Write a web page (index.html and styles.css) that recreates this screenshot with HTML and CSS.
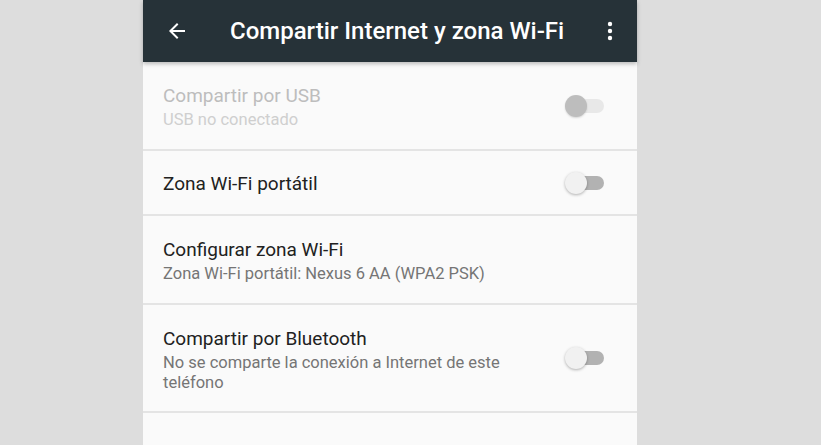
FILE: index.html
```html
<!DOCTYPE html>
<html lang="es">
<head>
<meta charset="utf-8">
<title>Compartir Internet y zona Wi-Fi</title>
<link rel="stylesheet" href="styles.css">
</head>
<body>
<div class="phone">
  <header class="appbar">
    <svg class="back" width="24" height="24" viewBox="0 0 24 24"><path d="M20 11H7.83l5.59-5.59L12 4l-8 8 8 8 1.41-1.41L7.83 13H20v-2z" fill="#fff"/></svg>
    <h1 class="title">Compartir Internet y zona Wi-Fi</h1>
    <svg class="more" width="24" height="24" viewBox="0 0 24 24"><circle cx="12" cy="5" r="2.2" fill="#fff"/><circle cx="12" cy="12" r="2.2" fill="#fff"/><circle cx="12" cy="19" r="2.2" fill="#fff"/></svg>
  </header>
  <main class="list">
    <div class="row row-tall disabled">
      <div class="text">
        <div class="primary">Compartir por USB</div>
        <div class="secondary">USB no conectado</div>
      </div>
      <div class="switch"><span class="track"></span><span class="thumb"></span></div>
    </div>
    <div class="row row-short">
      <div class="text">
        <div class="primary">Zona Wi-Fi portátil</div>
      </div>
      <div class="switch"><span class="track"></span><span class="thumb"></span></div>
    </div>
    <div class="row row-tall">
      <div class="text">
        <div class="primary">Configurar zona Wi-Fi</div>
        <div class="secondary">Zona Wi-Fi portátil: Nexus 6 AA (WPA2 PSK)</div>
      </div>
    </div>
    <div class="row row-xl">
      <div class="text">
        <div class="primary">Compartir por Bluetooth</div>
        <div class="secondary">No se comparte la conexión a Internet de este teléfono</div>
      </div>
      <div class="switch"><span class="track"></span><span class="thumb"></span></div>
    </div>
  </main>
</div>
</body>
</html>
```
FILE: styles.css
```css
html, body {
  margin: 0;
  padding: 0;
  height: 100%;
  background: #dddddd;
  overflow: hidden;
}
body {
  font-family: Roboto, "Noto Sans", "Liberation Sans", sans-serif;
}
.phone {
  margin-left: 143px;
  width: 494px;
  height: 445px;
  background: #fafafa;
  display: flex;
  flex-direction: column;
}
.appbar {
  height: 62px;
  flex: 0 0 62px;
  background: #263238;
  display: flex;
  align-items: center;
  box-shadow: 0 2px 4px rgba(0,0,0,0.25);
  position: relative;
  z-index: 1;
}
.back {
  margin-left: 22px;
  flex: 0 0 24px;
}
.title {
  margin: 0 0 0 41px;
  flex: 1;
  color: #ffffff;
  font-size: 24px;
  font-weight: 500;
  letter-spacing: 0;
}
.more {
  margin-right: 15px;
  flex: 0 0 24px;
}
.list {
  display: flex;
  flex-direction: column;
}
.row {
  display: flex;
  align-items: center;
  padding: 0 33px 0 20px;
  border-bottom: 2px solid #e4e4e4;
}
.row-tall { height: 87px; }
.row-short { height: 63px; }
.row-xl { height: 106px; }
.text {
  flex: 1;
  padding-right: 20px;
  padding-top: 3px;
}
.primary {
  font-size: 19px;
  line-height: 24px;
  color: #212121;
}
.secondary {
  font-size: 16.5px;
  line-height: 20px;
  color: #757575;
  margin-top: 2px;
}
.disabled .primary { color: #bdbdbd; }
.disabled .secondary { color: #cfcfcf; }
.switch {
  position: relative;
  width: 39px;
  height: 24px;
  flex: 0 0 39px;
}
.track {
  position: absolute;
  left: 2px;
  right: 0;
  top: 5px;
  height: 14px;
  border-radius: 7px;
  background: #b2b2b2;
}
.thumb {
  position: absolute;
  left: 0;
  top: 1px;
  width: 22px;
  height: 22px;
  border-radius: 50%;
  background: #f1f1f1;
  box-shadow: 0 1px 3px rgba(0,0,0,0.3);
}
.disabled .track { background: #e8e8e8; }
.disabled .thumb { background: #bdbdbd; box-shadow: 0 1px 2px rgba(0,0,0,0.15); }
```
